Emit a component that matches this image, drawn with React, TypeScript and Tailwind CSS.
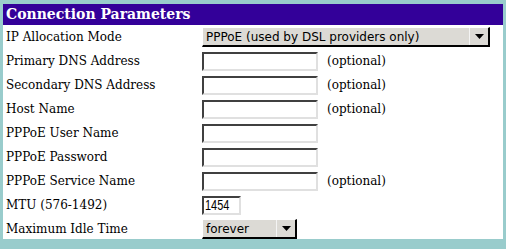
import React from "react";

const serif = { fontFamily: '"DejaVu Serif", serif' };
const sans = { fontFamily: '"DejaVu Sans", sans-serif' };

function TextInput({ value = "", w = "w-[116px]" }: { value?: string; w?: string }) {
  return (
    <div
      className={`${w} h-[19px] bg-white border-2 border-t-[#404040] border-l-[#404040] border-b-[#e0e0e0] border-r-[#e0e0e0] flex items-center pl-[1px] text-[14px] leading-none text-black`}
      style={{ fontFamily: '"Liberation Sans", sans-serif' }}
    >
      {value && <span className="inline-block origin-left scale-x-[0.78]">{value}</span>}
    </div>
  );
}

function Select({ label, w }: { label: string; w: string }) {
  return (
    <div className={`${w} h-[20px] flex items-stretch bg-[#dcdad5] border-b-2 border-r-2 border-b-black border-r-black border-t border-l border-t-white border-l-white`}>
      <div className="flex-1 flex items-center pl-[3px] text-[12px] text-black leading-none" style={sans}>
        {label}
      </div>
      <div className="w-[19px] flex items-center justify-center border-l border-l-[#f4f4f4]">
        <svg width="9" height="5" viewBox="0 0 9 5">
          <polygon points="0,0 9,0 4.5,5" fill="#000" />
        </svg>
      </div>
    </div>
  );
}

function Row({ label, children, note }: { label: string; children: React.ReactNode; note?: boolean }) {
  return (
    <div className="h-[24px] flex items-center">
      <div className="w-[199px] pl-[3px] text-[12px] text-black" style={serif}>
        {label}
      </div>
      {children}
      {note && (
        <div className="ml-[9px] text-[12px] text-black" style={serif}>
          (optional)
        </div>
      )}
    </div>
  );
}

export default function App() {
  return (
    <div className="w-[506px] h-[249px] bg-[#99cccc] pt-[4px] pl-[3px]">
      <div className="w-[500px] h-[235px] bg-white">
        <div className="h-[21px] bg-[#330099] text-white font-bold text-[14px] pl-[3px] flex items-center" style={serif}>
          Connection Parameters
        </div>
        <Row label="IP Allocation Mode">
          <Select label="PPPoE (used by DSL providers only)" w="w-[288px]" />
        </Row>
        <Row label="Primary DNS Address" note>
          <TextInput />
        </Row>
        <Row label="Secondary DNS Address" note>
          <TextInput />
        </Row>
        <Row label="Host Name" note>
          <TextInput />
        </Row>
        <Row label="PPPoE User Name">
          <TextInput />
        </Row>
        <Row label="PPPoE Password">
          <TextInput />
        </Row>
        <Row label="PPPoE Service Name" note>
          <TextInput />
        </Row>
        <Row label="MTU (576-1492)">
          <TextInput value="1454" w="w-[39px]" />
        </Row>
        <Row label="Maximum Idle Time">
          <Select label="forever" w="w-[95px]" />
        </Row>
      </div>
    </div>
  );
}
